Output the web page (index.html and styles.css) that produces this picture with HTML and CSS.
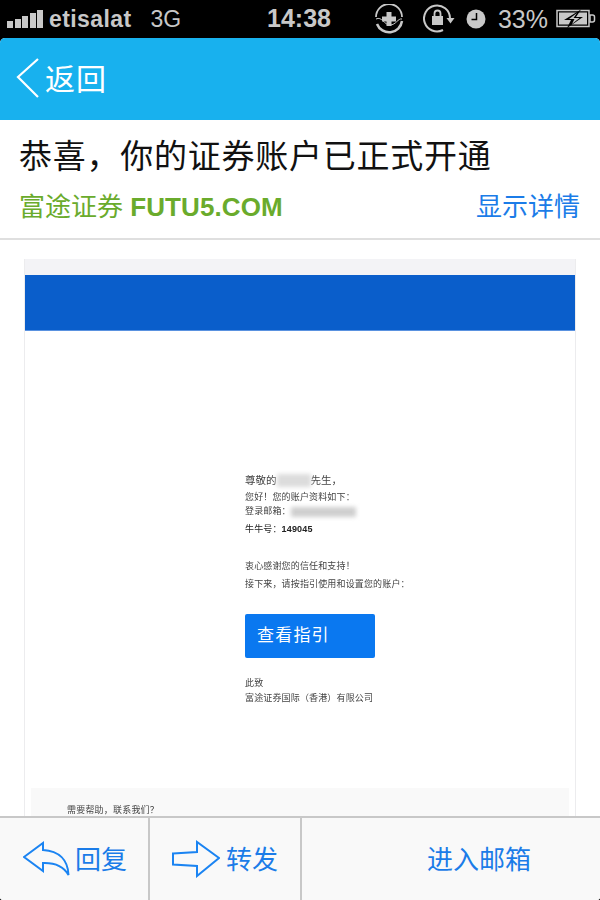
FILE: index.html
```html
<!DOCTYPE html>
<html lang="en">
<head>
    <meta charset="UTF-8">
    <meta name="viewport" content="width=device-width, initial-scale=1.0">
    <title>Mail</title>
    <link rel="stylesheet" href="styles.css">
</head>
<body>
    <div class="status-bar">
        <div class="status-left">
            <div class="signal">
                <span class="bar-1"></span><span class="bar-2"></span><span class="bar-3"></span><span class="bar-4"></span><span class="bar-5"></span>
            </div>
            <span class="carrier">etisalat</span>
            <span class="network">3G</span>
        </div>
        <div class="status-time">14:38</div>
        <div class="status-right">
            <svg class="icon-plus" width="30" height="30" viewBox="0 0 30 30">
                <path d="M2 13A13 13 0 0 1 28 13" fill="none" stroke="#c8c8c8" stroke-width="1.800"/>
                <path d="M28 17A13 13 0 0 1 3 20" fill="none" stroke="#c8c8c8" stroke-width="2.500"/>
                <path d="M2 15C8 12 10 21 16 21C22 21 24 14 28 15" fill="none" stroke="#c8c8c8" stroke-width="1"/>
                <path d="M12.500 8h5v4.500h4.500v5h-4.500v4.500h-5v-4.500h-4.500v-5h4.500z" fill="#c8c8c8"/>
            </svg>
            <svg class="icon-lock" width="34" height="32" viewBox="0 0 34 32">
                <path d="M27 15A13 13 0 1 0 20 27" fill="none" stroke="#c8c8c8" stroke-width="2"/>
                <path d="M23.500 15h8l-4 5.500z" fill="#c8c8c8"/>
                <rect x="9" y="13" width="11" height="9" fill="#c8c8c8"/>
                <path d="M11.500 13V10.500a3 3 0 0 1 6 0V13" fill="none" stroke="#c8c8c8" stroke-width="1.800"/>
            </svg>
            <svg class="icon-clock" width="20" height="20" viewBox="0 0 20 20">
                <circle cx="10" cy="10" r="9.500" fill="#c8c8c8"/>
                <path d="M10.500 4v6.500H5.500" fill="none" stroke="#000" stroke-width="1.500"/>
            </svg>
            <span class="battery-text">33%</span>
            <svg class="icon-battery" width="40" height="20" viewBox="0 0 40 20">
                <rect x="1" y="1.500" width="32" height="16" fill="none" stroke="#c8c8c8" stroke-width="1.500"/>
                <rect x="3" y="3.500" width="28" height="12" fill="#c8c8c8"/>
                <path d="M34 6h2.500a2 2 0 0 1 2 2v3a2 2 0 0 1-2 2H34z" fill="none" stroke="#c8c8c8" stroke-width="1.500"/>
                <path d="M25 0.500L8 11h7l-4 8L27 8h-7z" fill="#000"/>
                <path d="M21 4L13 10h5.500l-2.500 5L23.500 9h-6z" fill="#c8c8c8"/>
            </svg>
        </div>
    </div>

    <div class="app">
        <header class="nav-bar">
            <svg class="back-arrow" width="26" height="44" viewBox="0 0 26 44">
                <path d="M23 2L3 20L23 40" fill="none" stroke="#fff" stroke-width="2.200"/>
            </svg>
            <span class="back-text">返回</span>
        </header>

        <section class="mail-head">
            <h1>恭喜，你的证券账户已正式开通</h1>
            <div class="mail-meta">
                <div class="sender">富途证券 <b>FUTU5.COM</b></div>
                <a class="details" href="#details">显示详情</a>
            </div>
        </section>

        <main class="mail-body">
            <div class="email">
                <div class="email-top"></div>
                <div class="email-banner"></div>
                <div class="email-content">
                    <p class="greeting">尊敬的<span class="blur-name"></span>先生，</p>
                    <p class="line-1">您好！您的账户资料如下：</p>
                    <p class="line-2">登录邮箱：<span class="blur-mail"></span></p>
                    <p class="line-3">牛牛号：<b>149045</b></p>
                    <p class="line-4">衷心感谢您的信任和支持！</p>
                    <p class="line-5">接下来，请按指引使用和设置您的账户：</p>
                    <a class="guide-button" href="#guide">查看指引</a>
                    <p class="line-6">此致</p>
                    <p class="line-7">富途证券国际（香港）有限公司</p>
                </div>
                <div class="email-footer">需要帮助，联系我们？</div>
            </div>
        </main>

        <footer class="toolbar">
            <a class="tool tool-reply" href="#reply">
                <svg width="48" height="36" viewBox="0 0 48 36">
                    <path d="M1 16L20 2V9C36 10 45 19 45.500 34C41 26 34 21.500 20 22V30Z" fill="none" stroke="#1b84f2" stroke-width="2"/>
                </svg>
                <span>回复</span>
            </a>
            <a class="tool tool-forward" href="#forward">
                <svg width="48" height="38" viewBox="0 0 48 38">
                    <path d="M1 13.500L25 12V2L47 18L25 36V26L1 24.500Z" fill="none" stroke="#1b84f2" stroke-width="2"/>
                </svg>
                <span>转发</span>
            </a>
            <a class="tool tool-mailbox" href="#mailbox"><span>进入邮箱</span></a>
        </footer>
    </div>
</body>
</html>
```

FILE: styles.css
```css
* {
    margin: 0;
    padding: 0;
    box-sizing: border-box;
}

html, body {
    width: 600px;
    height: 900px;
    overflow: hidden;
}

body {
    font-family: "Liberation Sans", "Noto Sans CJK SC", sans-serif;
    background-color: #000;
    display: flex;
    flex-direction: column;
}

a {
    text-decoration: none;
}

.status-bar {
    height: 38px;
    display: flex;
    align-items: center;
    justify-content: space-between;
    color: #c8c8c8;
    position: relative;
    flex-shrink: 0;
}

.status-left {
    display: flex;
    align-items: center;
    padding-left: 7px;
}

.signal {
    display: flex;
    align-items: flex-end;
    gap: 1.500px;
    height: 18px;
    margin-right: 6px;
}

.signal span {
    width: 6px;
    background-color: #c8c8c8;
}

.bar-1 { height: 7px; }
.bar-2 { height: 9px; }
.bar-3 { height: 12px; }
.bar-4 { height: 15px; }
.bar-5 { height: 18px; }

.carrier {
    font-size: 23px;
    font-weight: bold;
    letter-spacing: 0.4px;
}

.network {
    font-size: 23px;
    margin-left: 19px;
}

.status-time {
    font-size: 25px;
    font-weight: bold;
    position: absolute;
    left: 267px;
    top: 4px;
}

.status-right {
    display: flex;
    align-items: center;
    padding-right: 4px;
}

.icon-plus {
    margin-right: 19px;
}

.icon-lock {
    margin-right: 9px;
}

.icon-clock {
    margin-right: 12px;
}

.battery-text {
    font-size: 25px;
    margin-right: 8px;
}

.app {
    flex: 1;
    min-height: 0;
    display: flex;
    flex-direction: column;
    background-color: #fff;
    border-radius: 5px 5px 3px 3px;
    overflow: hidden;
}

.nav-bar {
    height: 82px;
    background-color: #18b1ee;
    display: flex;
    align-items: center;
    padding-left: 15px;
    flex-shrink: 0;
}

.back-text {
    color: #fff;
    font-size: 30px;
    margin: 0 0 5px 4px;
    letter-spacing: 1px;
}

.mail-head {
    height: 120px;
    border-bottom: 2px solid #dfdfdf;
    padding: 14px 20px 0 19px;
    flex-shrink: 0;
}

.mail-head h1 {
    font-size: 33px;
    font-weight: normal;
    color: #111;
    line-height: 46px;
    letter-spacing: 0.75px;
    white-space: nowrap;
}

.mail-meta {
    display: flex;
    justify-content: space-between;
    align-items: center;
    margin-top: 8px;
}

.sender {
    color: #6aab2c;
    font-size: 26px;
    line-height: 38px;
}

.sender b {
    letter-spacing: 0.1px;
}

.details {
    color: #1b7ce8;
    font-size: 26px;
    line-height: 38px;
}

.mail-body {
    flex: 1;
    min-height: 0;
    overflow: hidden;
    padding: 19px 24px 0;
}

.email {
    border-left: 1px solid #ececee;
    border-right: 1px solid #ececee;
    height: 620px;
}

.email-top {
    height: 16px;
    background-color: #f3f3f6;
}

.email-banner {
    height: 56px;
    background-color: #0a5ecb;
    border-bottom: 1px solid #5a92e0;
}

.email-content {
    height: 457px;
    padding: 142px 0 0 220px;
    font-size: 9px;
    letter-spacing: 0.15px;
    color: #444;
}

.email-content p {
    line-height: 14px;
    white-space: nowrap;
    filter: blur(0.3px);
}

.greeting {
    font-size: 10.500px;
    letter-spacing: 0;
    display: flex;
    align-items: center;
}

.blur-name {
    width: 34px;
    height: 13px;
    background-color: #dcdcdc;
    filter: blur(2px);
}

.blur-mail {
    display: inline-block;
    width: 65px;
    height: 10px;
    background-color: #cfcfcf;
    filter: blur(2px);
    vertical-align: middle;
}

.line-1 {
    margin-top: 3px;
}

.line-3 {
    margin-top: 4px;
    color: #222;
}

.line-4 {
    margin-top: 23px;
}

.line-5 {
    margin-top: 4px;
}

.guide-button {
    display: block;
    width: 130px;
    height: 44px;
    margin-top: 23px;
    padding-left: 12px;
    background-color: #0a78f0;
    border-radius: 2px;
    color: #fff;
    font-size: 17px;
    line-height: 44px;
    letter-spacing: 1.200px;
}

.line-6 {
    margin-top: 18px;
}

.line-7 {
    margin-top: 1px;
}

.email-footer {
    margin: 0 6px;
    height: 60px;
    background-color: #f9f9f9;
    padding: 15px 0 0 36px;
    font-size: 9px;
    letter-spacing: 0.2px;
    line-height: 14px;
    color: #444;
    filter: blur(0.3px);
}

.toolbar {
    height: 84px;
    display: flex;
    background-color: #f9f9f9;
    border-top: 2px solid #c8c8c8;
    flex-shrink: 0;
}

.tool {
    display: flex;
    align-items: center;
    color: #1b7ce8;
    font-size: 26px;
}

.tool span {
    margin-bottom: 4px;
}

.tool-reply {
    width: 150px;
    border-right: 2px solid #c8c8c8;
    padding-left: 23px;
    gap: 4px;
}

.tool-forward {
    width: 152px;
    border-right: 2px solid #c8c8c8;
    padding-left: 22px;
    gap: 6px;
}

.tool-mailbox {
    flex: 1;
    justify-content: center;
    padding-left: 56px;
}
```
